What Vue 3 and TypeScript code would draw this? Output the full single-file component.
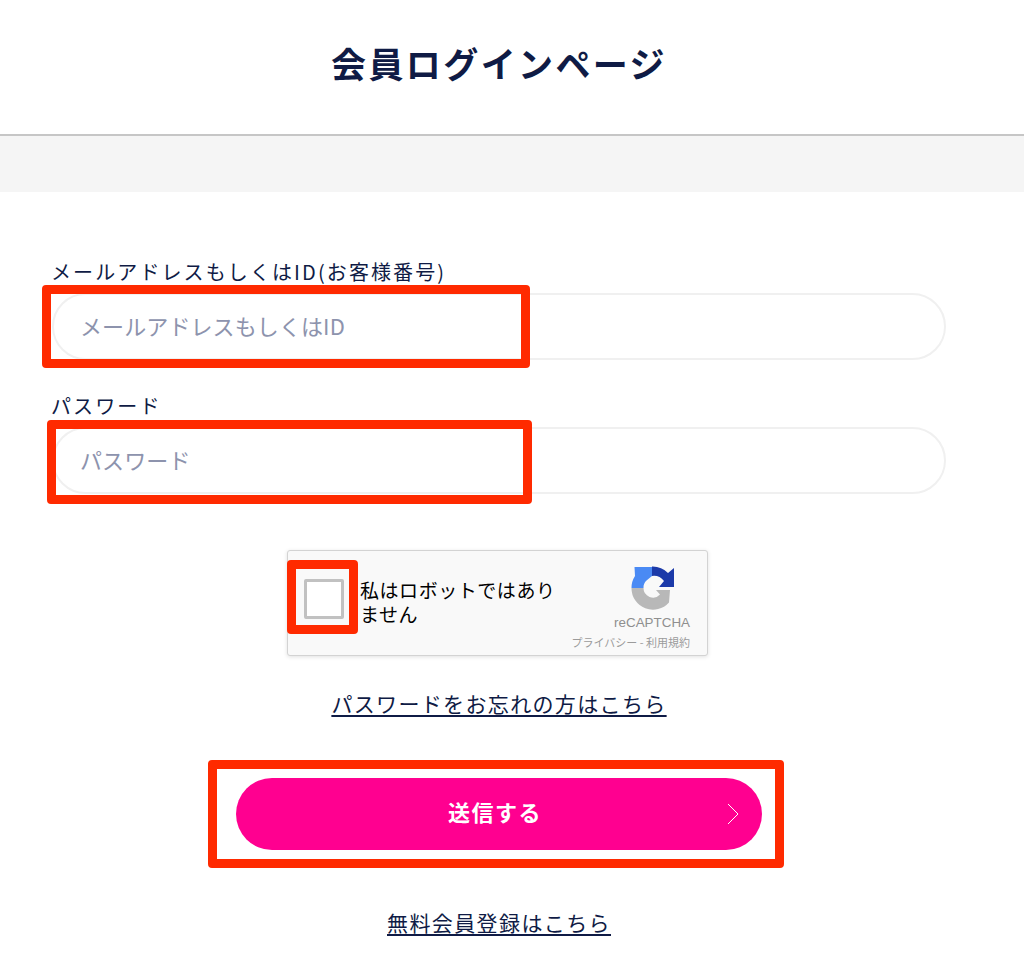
<script setup lang="ts">
const navy = '#0f1b45'
</script>

<template>
  <div class="page" :style="{ color: navy }">
    <header class="head"><h1>会員ログインページ</h1></header>
    <div class="band"></div>
    <form class="form" @submit.prevent>
      <div class="field first">
        <label for="mail">メールアドレスもしくはID(お客様番号)</label>
        <input id="mail" type="text" placeholder="メールアドレスもしくはID" />
        <span class="mark mark-mail"></span>
      </div>
      <div class="field second">
        <label for="pw">パスワード</label>
        <input id="pw" type="text" placeholder="パスワード" />
        <span class="mark mark-pw"></span>
      </div>
      <div class="captcha">
        <span class="check"></span>
        <span class="mark mark-check"></span>
        <span class="robot">私はロボットではありません</span>
        <div class="brand">
          <svg class="logo" viewBox="0 0 44 44" width="44" height="44" aria-hidden="true">
            <path fill="#b8b8b8" d="M0.500 22H12.500A9.500 9.500 0 0 0 29 28.500L25 24 39 24 38 36.500A21.500 21.500 0 0 1 0.500 22Z" />
            <path fill="#4a8af4" d="M0.500 22A21.500 21.500 0 0 1 4 10L3.500 1H21V10L15.500 14.500A9.500 9.500 0 0 0 12.500 22Z" />
            <path fill="#1c3aa9" d="M21 0.500A21.500 21.500 0 0 1 37 7L43 2V21H28L33 15A13 13 0 0 0 21 10Z" />
          </svg>
          <span class="rc">reCAPTCHA</span>
          <span class="terms">プライバシー - 利用規約</span>
        </div>
      </div>
      <a class="forgot" href="#">パスワードをお忘れの方はこちら</a>
      <div class="submit-wrap">
        <button class="submit" type="submit">
          送信する
          <svg class="chev" viewBox="0 0 12 22" width="12" height="22" aria-hidden="true">
            <path d="M1 1l10 10L1 21" fill="none" stroke="#fff" stroke-width="1" />
          </svg>
        </button>
        <span class="mark mark-btn"></span>
      </div>
      <a class="signup" href="#">無料会員登録はこちら</a>
    </form>
  </div>
</template>

<style scoped>
.page {
  font-family: "Noto Sans CJK JP", "Noto Sans", sans-serif;
  height: 972px;
  background: #fff;
  overflow: hidden;
}
.head {
  height: 134px;
  border-bottom: 2px solid #c6c6c6;
  display: flex;
  align-items: center;
  justify-content: center;
  box-sizing: content-box;
  padding-right: 26px;
}
h1 {
  margin: 0;
  font-size: 35px;
  letter-spacing: 2.4px;
  line-height: 1;
  font-weight: 700;
  padding-bottom: 10px;
}
.band { height: 56px; background: #f5f5f5; }
.form {
  display: flex;
  flex-direction: column;
  padding: 0 78px 0 52px;
}
.field { position: relative; display: flex; flex-direction: column; }
.field.first { margin-top: 65px; }
.field.second { margin-top: 31px; }
label {
  font-size: 20px;
  letter-spacing: 2.1px;
  line-height: 30px;
  height: 36px;
  margin-left: -1px;
}
input {
  height: 67px;
  box-sizing: border-box;
  border: 2px solid #f0f0f0;
  border-radius: 34px;
  padding: 0 26px 4px;
  font: inherit;
  font-size: 22px;
  letter-spacing: 0.1px;
  background: #fff;
  outline: none;
}
input::placeholder { color: #8d93ad; opacity: 1; }
.mark {
  position: absolute;
  border: 9px solid #ff2a00;
  border-radius: 4px;
  box-sizing: border-box;
  pointer-events: none;
}
.mark-mail { left: -10px; top: 28px; width: 488px; height: 83px; }
.mark-pw { left: -5px; top: 29px; width: 485px; height: 84px; }
.captcha {
  position: relative;
  align-self: flex-start;
  margin: 56px 0 0 235px;
  width: 421px;
  height: 106px;
  box-sizing: border-box;
  background: #f9f9f9;
  border: 1.5px solid #d3d3d3;
  border-radius: 3px;
  box-shadow: 0 1px 4px rgba(0, 0, 0, 0.12);
  color: #000;
}
.check {
  position: absolute;
  left: 16px;
  top: 28px;
  width: 40px;
  height: 40px;
  box-sizing: border-box;
  background: #fff;
  border: 3px solid #c1c1c1;
  border-radius: 2px;
}
.mark-check { left: -1px; top: 9px; width: 71px; height: 74px; }
.robot {
  position: absolute;
  left: 72px;
  top: 27px;
  width: 198px;
  font-size: 19px;
  letter-spacing: 0.55px;
  line-height: 24px;
}
.brand {
  position: absolute;
  right: 17px;
  top: 15px;
  display: flex;
  flex-direction: column;
  align-items: flex-end;
}
.logo { margin-right: 15px; }
.rc {
  font-size: 13.4px;
  line-height: 18px;
  margin-top: 4px;
  color: #8f8f8f;
  font-family: "Liberation Sans", sans-serif;
}
.terms {
  font-size: 11px;
  line-height: 14px;
  margin-top: 3px;
  color: #9b9b9b;
  white-space: nowrap;
}
.forgot, .signup {
  align-self: center;
  color: inherit;
  font-size: 21px;
  line-height: 30px;
  letter-spacing: 1.35px;
  text-underline-offset: 3px;
}
.forgot { margin-top: 32px; }
.submit-wrap { position: relative; margin: 60px 0 0 184px; width: 526px; }
.submit {
  display: flex;
  align-items: center;
  justify-content: center;
  position: relative;
  width: 526px;
  height: 72px;
  padding: 0 8px 6px 0;
  border: 0;
  border-radius: 36px;
  background: #ff0090;
  color: #fff;
  font: inherit;
  font-size: 22px;
  font-weight: 700;
  letter-spacing: 1.5px;
}
.chev { position: absolute; right: 23px; top: 25px; }
.mark-btn { left: -28px; top: -18px; width: 576px; height: 108px; }
.signup { margin-top: 57px; letter-spacing: 1.4px; }
</style>
